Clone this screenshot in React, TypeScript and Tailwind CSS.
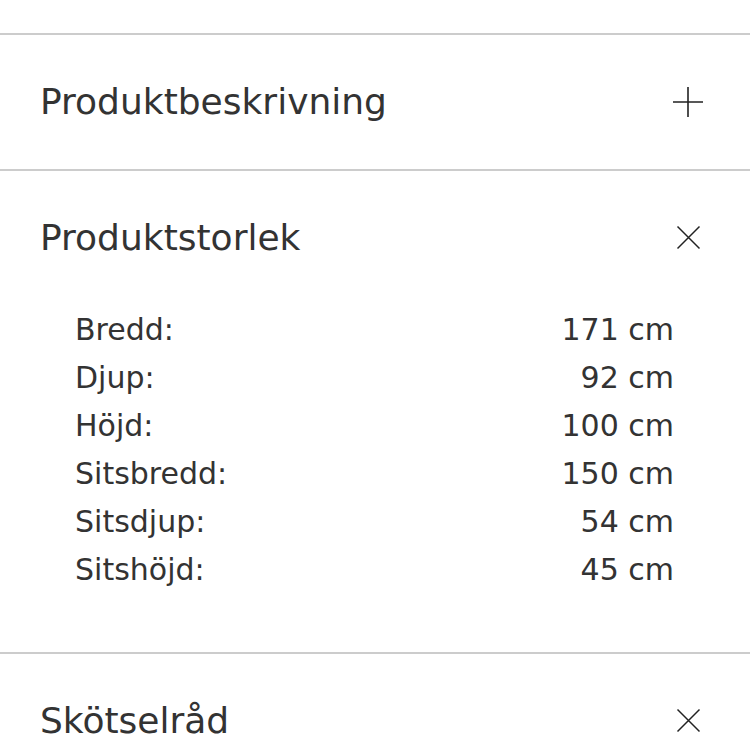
const rows = [
  { label: "Bredd:", value: "171 cm" },
  { label: "Djup:", value: "92 cm" },
  { label: "Höjd:", value: "100 cm" },
  { label: "Sitsbredd:", value: "150 cm" },
  { label: "Sitsdjup:", value: "54 cm" },
  { label: "Sitshöjd:", value: "45 cm" },
];

const PlusIcon = () => (
  <svg width="30" height="30" viewBox="0 0 30 30" fill="none" stroke="#222" strokeWidth="1.6">
    <path d="M15 0v30M0 15h30" />
  </svg>
);

const CloseIcon = () => (
  <svg width="30" height="30" viewBox="0 0 30 30" fill="none" stroke="#222" strokeWidth="1.5">
    <path d="M4.5 3.5l22 22M26.5 3.5l-22 22" />
  </svg>
);

const Heading = ({ title, open }: { title: string; open: boolean }) => (
  <div className="flex h-[134px] items-center justify-between pl-10 pr-[47px]">
    <h2 className="text-[36px] leading-none text-[#333]">{title}</h2>
    {open ? <CloseIcon /> : <PlusIcon />}
  </div>
);

export default function App() {
  return (
    <div className="h-[750px] w-[750px] overflow-hidden bg-white font-['DejaVu_Sans',sans-serif] text-[#333]">
      <div className="h-[33px]" />
      <section className="border-t-2 border-[#cccccc]">
        <Heading title="Produktbeskrivning" open={false} />
      </section>
      <section className="border-t-2 border-[#cccccc] pb-[59px]">
        <Heading title="Produktstorlek" open />
        <dl className="pl-[75px] pr-[76px] text-[30px]">
          {rows.map((r) => (
            <div key={r.label} className="flex h-12 items-center justify-between">
              <dt>{r.label}</dt>
              <dd>{r.value}</dd>
            </div>
          ))}
        </dl>
      </section>
      <section className="border-t-2 border-[#cccccc]">
        <Heading title="Skötselråd" open />
      </section>
    </div>
  );
}
